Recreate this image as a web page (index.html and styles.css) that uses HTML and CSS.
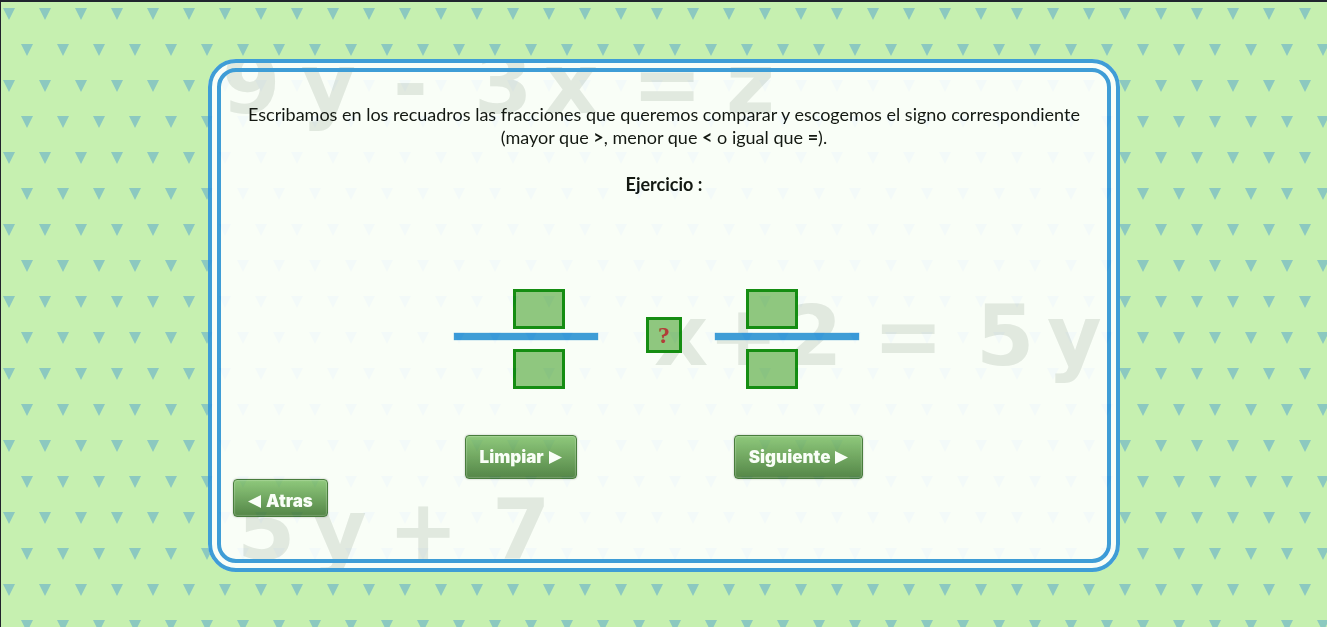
FILE: index.html
```html
<!DOCTYPE html>
<html lang="es">
<head>
<meta charset="utf-8">
<title>Comparar fracciones</title>
<link rel="stylesheet" href="styles.css">
</head>
<body>
<main class="card">
  <div class="formulas" aria-hidden="true">
    <div class="formula formula-top"><span class="sym sym-9">9</span><span class="sym sym-y">y</span><span class="sym sym-minus">-</span><span class="sym sym-3">3</span><span class="sym sym-x">x</span><span class="sym sym-eq">=</span><span class="sym sym-z">z</span></div>
    <div class="formula formula-mid"><span class="sym mid-x">x</span><span class="sym mid-plus">+</span><span class="sym mid-2">2</span><span class="sym mid-eq">=</span><span class="sym mid-5">5</span><span class="sym mid-y">y</span></div>
    <div class="formula formula-low"><span class="sym low-5">5</span><span class="sym low-y">y</span><span class="sym low-plus">+</span><span class="sym low-7">7</span></div>
  </div>
  <div class="content">
    <p class="intro">Escribamos en los recuadros las fracciones que queremos comparar y escogemos el signo correspondiente<br>(mayor que <b>&gt;</b>, menor que <b>&lt;</b> o igual que <b>=</b>).</p>
    <h1 class="title">Ejercicio :</h1>
    <div class="exercise">
      <div class="fraction fraction-left">
        <input class="box" type="text" aria-label="Numerador de la primera fracción">
        <span class="bar"></span>
        <input class="box" type="text" aria-label="Denominador de la primera fracción">
      </div>
      <button class="sign" type="button" aria-label="Elegir signo">?</button>
      <div class="fraction fraction-right">
        <input class="box" type="text" aria-label="Numerador de la segunda fracción">
        <span class="bar"></span>
        <input class="box" type="text" aria-label="Denominador de la segunda fracción">
      </div>
    </div>
    <div class="actions">
      <button class="btn" type="button">Limpiar <svg class="arrow" viewBox="0 0 13 13"><path d="M0 0 13 6.5 0 13z"/></svg></button>
      <button class="btn" type="button">Siguiente <svg class="arrow" viewBox="0 0 13 13"><path d="M0 0 13 6.5 0 13z"/></svg></button>
    </div>
    <button class="btn btn-back" type="button"><svg class="arrow" viewBox="0 0 13 13"><path d="M13 0 0 6.5 13 13z"/></svg> Atras</button>
  </div>
</main>
</body>
</html>
```
FILE: styles.css
```css
* { box-sizing: border-box; }
html { min-height: 100%; }
body {
  margin: 0;
  min-height: 100vh;
  padding: 57px 16px 48px;
  border-top: 2px solid #20252e;
  border-left: 1px solid #20222b;
  background: #c6f0b0 url("data:image/svg+xml,%3Csvg xmlns='http://www.w3.org/2000/svg' width='36' height='72'%3E%3Cpath fill='%238cc9c0' d='M3 8h12L9 20zM21 44h12l-6 12z'/%3E%3C/svg%3E") 0 0 / 36px 72px border-box;
  font-family: Lato, "Open Sans", sans-serif;
  color: #000;
}
.card {
  position: relative;
  isolation: isolate;
  max-width: 912px;
  margin: 0 auto;
  border: 13px solid transparent;
  border-radius: 28px;
  background: #fff border-box;
  opacity: 0.9;
}
.card::before {
  content: "";
  position: absolute;
  inset: -13px;
  z-index: -1;
  border: 13px double #3093db;
  border-radius: 28px;
}
.formulas {
  position: absolute;
  inset: -9px;
  z-index: -2;
  overflow: hidden;
  border-radius: 24px;
  font: bold 84px/96px "DejaVu Sans", sans-serif;
  color: #e5e8e5;
}
.formula { position: absolute; left: 0; height: 96px; width: 100%; }
.formula-top { top: -27px; }
.formula-mid { top: 225px; }
.formula-low { top: 419px; }
.sym { position: absolute; top: 0; }
.sym-9 { left: 10px; }
.sym-y { left: 89px; }
.sym-minus { left: 181px; }
.sym-3 { left: 262px; }
.sym-x { left: 332px; }
.sym-eq { left: 420px; }
.sym-z { left: 514px; }
.mid-x { left: 442px; }
.mid-plus { left: 496px; }
.mid-2 { left: 572px; }
.mid-eq { left: 661px; }
.mid-5 { left: 764px; }
.mid-y { left: 835px; }
.low-5 { left: 25px; }
.low-y { left: 100px; }
.low-plus { left: 176px; }
.low-7 { left: 280px; }
.content { padding: 31px 12px 42px; }
.intro, .title {
  margin: 0;
  font-size: 18px;
  line-height: 23px;
  text-align: center;
}
.title { margin-top: 24px; font-weight: bold; }
.exercise {
  display: flex;
  justify-content: center;
  align-items: center;
  margin-top: 93px;
  padding-right: 15px;
}
.fraction {
  display: flex;
  flex-direction: column;
  align-items: center;
  width: 144px;
}
.fraction-left .box { margin-left: 26px; }
.fraction-right .box { margin-right: 30px; }
.box, .sign {
  border: 3px solid #028200;
  border-radius: 0;
  background: #89c27a;
  padding: 0;
  text-align: center;
  font: bold 24px/30px "Liberation Serif", serif;
  color: #b02a2a;
}
.box { width: 52px; height: 40px; }
.bar {
  width: 144px;
  height: 7px;
  margin: 4px 0 9px;
  background: #3093db;
  box-shadow: 0 0 1px #3093db;
}
.sign { width: 36px; height: 36px; margin: 0 33px 8px 48px; line-height: 24px; }
.actions {
  display: flex;
  justify-content: center;
  gap: 157px;
  margin-top: 46px;
}
.btn {
  display: inline-flex;
  align-items: center;
  gap: 5px;
  height: 44px;
  padding: 0 14px;
  border: 1px solid #3b7030;
  border-radius: 4px;
  background: linear-gradient(#89c476, #487a3c);
  box-shadow: inset 0 0 1px 1px rgba(255, 255, 255, 0.2), 0 0 2px rgba(0, 0, 0, 0.3);
  font: 900 17px/20px Inter, sans-serif;
  color: #fff;
}
.btn-back { display: flex; height: 38px; padding-top: 6px; }
.arrow { width: 13px; height: 13px; fill: currentColor; }
```
